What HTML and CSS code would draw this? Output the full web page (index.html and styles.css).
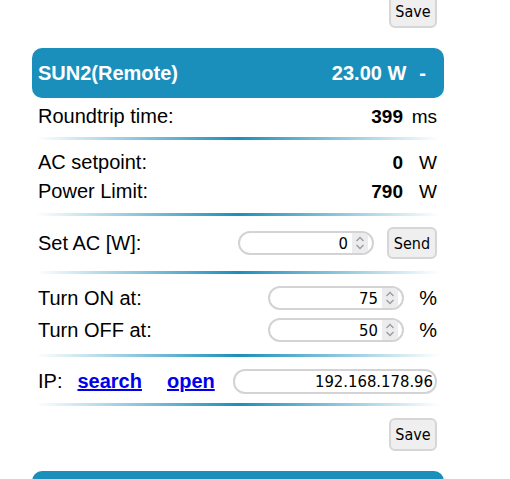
FILE: index.html
```html
<!DOCTYPE html>
<html lang="en">
<head>
  <meta charset="UTF-8">
  <meta name="viewport" content="width=device-width, initial-scale=1.0">
  <title>SUN2 Remote</title>
  <link rel="stylesheet" href="styles.css">
</head>
<body>

  <div class="page">
    <div class="save-row top">
      <button class="btn save">Save</button>
    </div>

    <div class="card">
      <div class="head">
        <span class="name">SUN2(Remote)</span>
        <span class="power">23.00 W</span>
        <span class="dash">-</span>
      </div>

      <div class="group g-rtt">
        <div class="row">
          <span class="label">Roundtrip time:</span>
          <span class="val">399</span>
          <span class="unit">ms</span>
        </div>
      </div>
      <div class="sep"></div>

      <div class="group g-limits">
        <div class="row">
          <span class="label">AC setpoint:</span>
          <span class="val">0</span>
          <span class="unit">W</span>
        </div>
        <div class="row">
          <span class="label">Power Limit:</span>
          <span class="val">790</span>
          <span class="unit">W</span>
        </div>
      </div>
      <div class="sep"></div>

      <div class="group g-set">
        <div class="row tall">
          <span class="label">Set AC [W]:</span>
          <div class="num">
            <input type="text" class="num-input" value="0">
            <span class="spin">
              <svg width="10" height="18" viewBox="0 0 10 18"><path d="M1.5 7 L5 3.5 L8.5 7 M1.5 11 L5 14.5 L8.5 11" fill="none" stroke="#9a9a9a" stroke-width="1.3"/></svg>
            </span>
          </div>
          <button class="btn send">Send</button>
        </div>
      </div>
      <div class="sep"></div>

      <div class="group g-turn">
        <div class="row tall">
          <span class="label">Turn ON at:</span>
          <div class="num">
            <input type="text" class="num-input" value="75">
            <span class="spin">
              <svg width="10" height="18" viewBox="0 0 10 18"><path d="M1.5 7 L5 3.5 L8.5 7 M1.5 11 L5 14.5 L8.5 11" fill="none" stroke="#9a9a9a" stroke-width="1.3"/></svg>
            </span>
          </div>
          <span class="unit pct">%</span>
        </div>
        <div class="row tall">
          <span class="label">Turn OFF at:</span>
          <div class="num">
            <input type="text" class="num-input" value="50">
            <span class="spin">
              <svg width="10" height="18" viewBox="0 0 10 18"><path d="M1.5 7 L5 3.5 L8.5 7 M1.5 11 L5 14.5 L8.5 11" fill="none" stroke="#9a9a9a" stroke-width="1.3"/></svg>
            </span>
          </div>
          <span class="unit pct">%</span>
        </div>
      </div>
      <div class="sep"></div>

      <div class="group g-ip">
        <div class="row">
          <span class="ip-label">IP:</span>
          <a href="#" class="link">search</a>
          <a href="#" class="link">open</a>
          <input type="text" class="ip-input" value="192.168.178.96">
        </div>
      </div>
      <div class="sep"></div>
    </div>

    <div class="save-row">
      <button class="btn save">Save</button>
    </div>

    <div class="card">
      <div class="head"></div>
    </div>
  </div>

</body>
</html>
```

FILE: styles.css
```css
body {
  font-family: "Liberation Sans", Arial, sans-serif;
  background-color: #ffffff;
  color: #000;
  margin: 0;
  padding: 0;
}
.page {
  width: 412px;
  margin-left: 32px;
}
.save-row {
  display: flex;
  justify-content: flex-end;
  padding-right: 7px;
  margin-top: 12px;
  margin-bottom: 20px;
}
.save-row.top {
  margin-top: -5px;
}
.btn {
  font-family: "DejaVu Sans Condensed", "DejaVu Sans", Tahoma, sans-serif;
  font-size: 16px;
  color: #000;
  background-color: #efefef;
  border: 2px solid #d6d6d6;
  border-radius: 6px;
  padding: 0;
  cursor: pointer;
}
.save {
  width: 48px;
  height: 33px;
}
.send {
  width: 50px;
  height: 32px;
  margin-left: 13px;
}
.head {
  display: flex;
  align-items: center;
  height: 50px;
  padding: 0 18px 0 6px;
  background-color: #1b8fbc;
  border-radius: 10px;
  color: #fff;
  font-size: 20px;
  font-weight: bold;
}
.head .name {
  flex: 1;
}
.head .dash {
  margin-left: 13px;
}
.group {
  padding: 0 7px 0 6px;
}
.g-rtt {
  padding-top: 4px;
  padding-bottom: 6px;
}
.g-limits {
  padding-top: 8px;
  padding-bottom: 7px;
}
.g-set {
  padding-top: 11px;
  padding-bottom: 12px;
}
.g-turn {
  padding-top: 8px;
  padding-bottom: 8px;
}
.g-ip {
  padding-top: 10px;
  padding-bottom: 7px;
}
.row {
  display: flex;
  align-items: center;
  height: 29px;
  font-size: 20px;
}
.row.tall {
  height: 32px;
}
.label {
  flex: 1;
}
.val {
  font-size: 19px;
  font-weight: bold;
}
.unit {
  width: 34px;
  text-align: right;
  font-size: 19px;
}
.unit.pct {
  width: 33px;
  font-size: 20px;
}
.sep {
  height: 3px;
  margin: 0 4px;
  background: linear-gradient(to right, rgba(27, 143, 188, 0), rgba(27, 143, 188, 0.5) 25%, #1b8fbc 50%, rgba(27, 143, 188, 0.5) 75%, rgba(27, 143, 188, 0));
}
.num {
  display: flex;
  align-items: center;
  width: 136px;
  height: 24px;
  box-sizing: border-box;
  border: 2px solid #d3d3d3;
  border-radius: 12px;
  padding-right: 4px;
  overflow: hidden;
}
.num-input {
  flex: 1;
  min-width: 0;
  border: none;
  outline: none;
  background: transparent;
  text-align: right;
  font-family: "DejaVu Sans Condensed", "DejaVu Sans", Tahoma, sans-serif;
  font-size: 16.5px;
  color: #000;
  padding: 0 4px 0 0;
}
.spin {
  display: flex;
  align-items: center;
  justify-content: center;
  width: 16px;
  height: 20px;
  background-color: #ececef;
}
.ip-label {
  margin-right: 15px;
}
.link {
  color: #0000ee;
  font-weight: bold;
  text-decoration: underline;
  margin-right: 25px;
}
.link + .link {
  margin-right: 0;
}
.ip-input {
  margin-left: auto;
  width: 204px;
  height: 25px;
  box-sizing: border-box;
  border: 2px solid #d3d3d3;
  border-radius: 12px;
  text-align: right;
  font-family: "DejaVu Sans Condensed", "DejaVu Sans", Tahoma, sans-serif;
  font-size: 16.5px;
  color: #000;
  padding: 0 2px 0 6px;
  outline: none;
}
```
